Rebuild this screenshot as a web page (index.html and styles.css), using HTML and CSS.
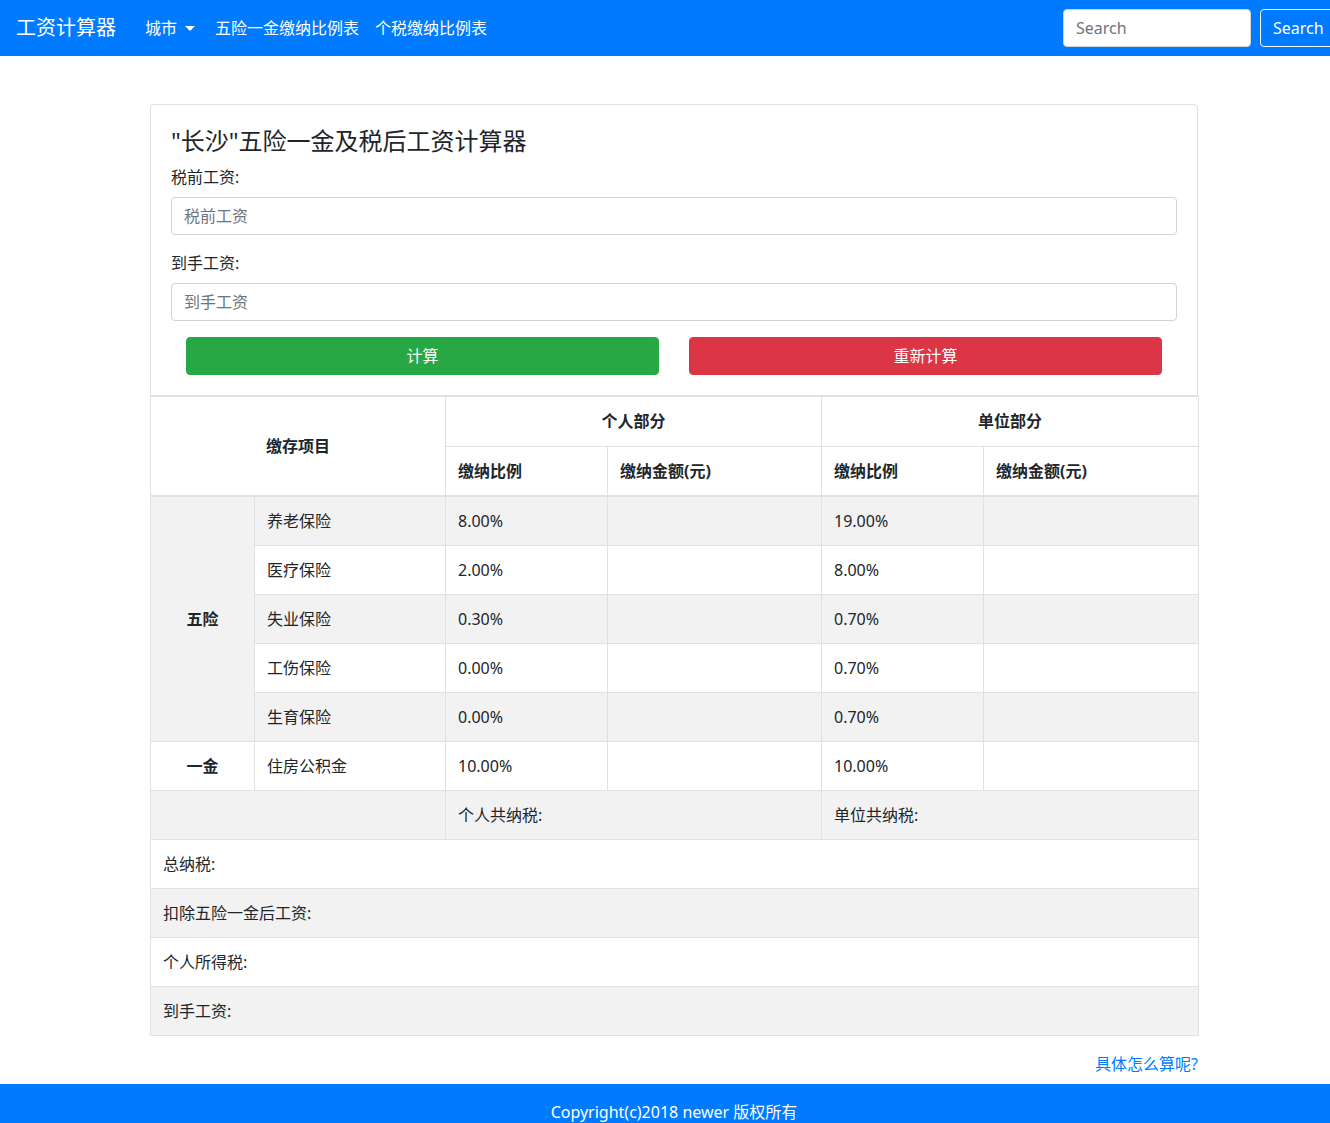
FILE: index.html
```html
<!DOCTYPE html>
<html lang="zh-CN">
<head>
<meta charset="utf-8">
<title>工资计算器</title>
<link rel="stylesheet" href="styles.css">
</head>
<body>
<nav class="navbar">
  <a class="brand" href="#">工资计算器</a>
  <ul class="nav">
    <li><a class="nav-link dropdown" href="#">城市<span class="caret"></span></a></li>
    <li><a class="nav-link" href="#">五险一金缴纳比例表</a></li>
    <li><a class="nav-link" href="#">个税缴纳比例表</a></li>
  </ul>
  <form class="search">
    <input class="search-input" type="text" placeholder="Search">
    <button class="search-btn" type="button">Search</button>
  </form>
</nav>

<main class="container">
  <section class="card">
    <h4 class="card-title">"长沙"五险一金及税后工资计算器</h4>
    <div class="form-group">
      <label class="label">税前工资:</label>
      <input class="form-control" type="text" placeholder="税前工资">
    </div>
    <div class="form-group">
      <label class="label">到手工资:</label>
      <input class="form-control" type="text" placeholder="到手工资">
    </div>
    <div class="btn-row">
      <div class="btn-col"><button class="btn btn-success" type="button">计算</button></div>
      <div class="btn-col"><button class="btn btn-danger" type="button">重新计算</button></div>
    </div>
  </section>

  <table class="table">
    <colgroup>
      <col class="c1"><col class="c2"><col class="c3"><col class="c4"><col class="c5"><col class="c6">
    </colgroup>
    <thead>
      <tr class="head-top">
        <th colspan="2" rowspan="2" class="center">缴存项目</th>
        <th colspan="2" class="center">个人部分</th>
        <th colspan="2" class="center">单位部分</th>
      </tr>
      <tr class="head-sub">
        <th>缴纳比例</th>
        <th>缴纳金额(元)</th>
        <th>缴纳比例</th>
        <th>缴纳金额(元)</th>
      </tr>
    </thead>
    <tbody>
      <tr class="odd">
        <th rowspan="5" class="center group">五险</th>
        <td>养老保险</td><td>8.00%</td><td></td><td>19.00%</td><td></td>
      </tr>
      <tr><td>医疗保险</td><td>2.00%</td><td></td><td>8.00%</td><td></td></tr>
      <tr class="odd"><td>失业保险</td><td>0.30%</td><td></td><td>0.70%</td><td></td></tr>
      <tr><td>工伤保险</td><td>0.00%</td><td></td><td>0.70%</td><td></td></tr>
      <tr class="odd"><td>生育保险</td><td>0.00%</td><td></td><td>0.70%</td><td></td></tr>
      <tr>
        <th class="center group">一金</th>
        <td>住房公积金</td><td>10.00%</td><td></td><td>10.00%</td><td></td>
      </tr>
      <tr class="odd">
        <td colspan="2"></td>
        <td colspan="2">个人共纳税:</td>
        <td colspan="2">单位共纳税:</td>
      </tr>
      <tr><td colspan="6">总纳税:</td></tr>
      <tr class="odd"><td colspan="6">扣除五险一金后工资:</td></tr>
      <tr><td colspan="6">个人所得税:</td></tr>
      <tr class="odd"><td colspan="6">到手工资:</td></tr>
    </tbody>
  </table>

  <div class="help"><a href="#" class="help-link">具体怎么算呢?</a></div>
</main>

<footer class="footer">
  <div class="footer-inner">Copyright(c)2018 newer 版权所有</div>
</footer>
</body>
</html>
```
FILE: styles.css
```css
* { box-sizing: border-box; }
html, body { margin: 0; padding: 0; }
body {
  font-family: "Noto Sans", "Noto Sans CJK SC", sans-serif;
  font-size: 16px;
  line-height: 1.5;
  color: #212529;
  background: #fff;
  overflow-x: hidden;
}
a { text-decoration: none; }

/* navbar */
.navbar {
  height: 56px;
  background: #007bff;
  display: flex;
  align-items: center;
  padding: 0 16px;
}
.brand {
  color: #fff;
  font-size: 20px;
  line-height: 30px;
  margin-right: 21px;
  white-space: nowrap;
}
.nav {
  list-style: none;
  margin: 0;
  padding: 0;
  display: flex;
}
.nav-link {
  display: block;
  color: #fff;
  padding: 8px;
  line-height: 24px;
  white-space: nowrap;
}
.nav-link.dropdown { padding-right: 12px; }
.caret {
  display: inline-block;
  width: 0;
  height: 0;
  margin-left: 8px;
  vertical-align: 3px;
  border-top: 5px solid #fff;
  border-left: 5px solid transparent;
  border-right: 5px solid transparent;
}
.search {
  margin-left: auto;
  margin-right: -30px;
  display: flex;
  align-items: center;
}
.search-input {
  width: 188px;
  height: 38px;
  border: 1px solid #ced4da;
  border-radius: 4px;
  padding: 6px 12px;
  font: inherit;
  color: #495057;
  background: #fff;
  margin-right: 9px;
}
.search-input::placeholder { color: #6c757d; }
.search-btn {
  width: 84px;
  height: 38px;
  border: 1px solid #f8f9fa;
  border-radius: 4px;
  background: transparent;
  color: #fff;
  font: inherit;
  text-align: left;
  padding: 6px 12px;
}

/* content */
.container {
  width: 1048px;
  margin: 48px 0 0 150px;
}
.card {
  border: 1px solid rgba(0, 0, 0, .125);
  border-radius: 4px 4px 0 0;
  padding: 20px;
  height: 292px;
}
.card-title {
  font-size: 24px;
  font-weight: 400;
  line-height: 1.2;
  margin: 2px 0 9px;
}
.form-group { margin-bottom: 16px; }
.label {
  display: block;
  margin-bottom: 8px;
}
.form-control {
  display: block;
  width: 100%;
  height: 38px;
  padding: 6px 12px;
  font: inherit;
  color: #495057;
  border: 1px solid #ced4da;
  border-radius: 4px;
  background: #fff;
}
.form-control::placeholder { color: #6c757d; }
.btn-row {
  display: grid;
  grid-template-columns: 1fr 1fr;
}
.btn-col { padding: 0 15px; }
.btn {
  display: block;
  width: 100%;
  height: 38px;
  border: 1px solid transparent;
  border-radius: 4px;
  color: #fff;
  font: inherit;
  padding: 6px 12px;
}
.btn-success { background: #28a745; border-color: #28a745; }
.btn-danger { background: #dc3545; border-color: #dc3545; }

/* table */
.table {
  width: 1048px;
  table-layout: fixed;
  border-collapse: collapse;
}
.c1 { width: 104px; }
.c2 { width: 191px; }
.c3 { width: 162px; }
.c4 { width: 214px; }
.c5 { width: 162px; }
.c6 { width: 215px; }
.table th, .table td {
  border: 1px solid #dee2e6;
  padding: 12px;
  line-height: 24px;
  text-align: left;
  vertical-align: middle;
}
.table .head-top th { padding: 12px 12px 13px; }
.table th { font-weight: 700; }
.table thead tr:last-child th { border-bottom: 2px solid #dee2e6; }
.table thead tr:first-child th:first-child { border-bottom: 2px solid #dee2e6; }
.table .center { text-align: center; }
.table tbody tr.odd { background: rgba(0, 0, 0, .05); }

.help {
  text-align: right;
  padding-top: 16px;
  height: 40px;
  margin-bottom: 8px;
  line-height: 24px;
}
.help-link { color: #007bff; }

.footer {
  background: #007bff;
  height: 39px;
  overflow: hidden;
  padding-top: 16px;
}
.footer-inner {
  width: 1048px;
  margin-left: 150px;
  text-align: center;
  color: #fff;
  line-height: 24px;
}
```
